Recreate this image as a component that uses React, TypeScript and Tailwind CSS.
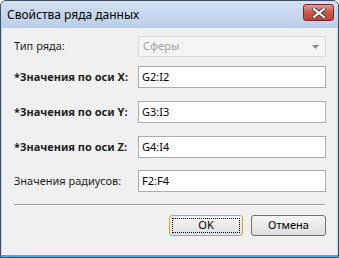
import * as React from "react"

const font = { fontFamily: '"Noto Sans", "DejaVu Sans", sans-serif' }

function Field({ value }: { value: string }) {
  return (
    <div className="flex h-[22px] w-[188px] items-center border border-[#abadb3] bg-white pl-[3px] text-[11px] text-black">
      {value}
    </div>
  )
}

function Row({
  label,
  bold,
  children,
  className,
}: {
  label: string
  bold?: boolean
  children: React.ReactNode
  className?: string
}) {
  return (
    <div className={"flex items-center " + (className ?? "")}>
      <span
        className={
          "w-[124px] text-[11px] text-[#1e1e1e] " + (bold ? "font-bold" : "")
        }
      >
        {label}
      </span>
      {children}
    </div>
  )
}

export default function App() {
  return (
    <div
      className="flex h-[258px] w-[339px] flex-col overflow-hidden rounded-t-[6px] border border-[#3a4f66] bg-[#c4d6ec]"
      style={font}
    >
      <div className="flex h-[27px] shrink-0 items-center justify-between bg-gradient-to-b from-[#d2e0f1] to-[#bccfe8] pl-[6px] pr-[4px]">
        <span className="text-[12px] text-black">Свойства ряда данных</span>
        <div className="mt-[-4px] flex h-[17px] w-[31px] items-center justify-center rounded-[3px] border border-[#6e2b26] bg-gradient-to-b from-[#e29a8e] via-[#c9574a] to-[#b5463a]">
          <svg width="14" height="10" viewBox="0 0 14 10">
            <path
              d="M2 1 L12 9 M12 1 L2 9"
              stroke="#3a3a3a"
              strokeWidth="4"
              strokeLinecap="square"
            />
            <path
              d="M2 1 L12 9 M12 1 L2 9"
              stroke="#ffffff"
              strokeWidth="2.2"
              strokeLinecap="square"
            />
          </svg>
        </div>
      </div>
      <div className="mx-px flex flex-1 flex-col bg-[#f0f0f0] pl-[12px] pr-[10px] pt-[8px]">
        <Row label="Тип ряда:">
          <div className="flex h-[21px] w-[188px] items-center justify-between border border-[#d9d9d9] bg-[#f4f4f4] pl-[4px] pr-[6px] text-[11px] text-[#a0a0a0]">
            <span>Сферы</span>
            <svg width="7" height="4" viewBox="0 0 7 4">
              <path d="M0 0 H7 L3.5 4 Z" fill="#8a8a8a" />
            </svg>
          </div>
        </Row>
        <Row label="*Значения по оси X:" bold className="mt-[9px]">
          <Field value="G2:I2" />
        </Row>
        <Row label="*Значения по оси Y:" bold className="mt-[13px]">
          <Field value="G3:I3" />
        </Row>
        <Row label="*Значения по оси Z:" bold className="mt-[13px]">
          <Field value="G4:I4" />
        </Row>
        <Row label="Значения радиусов:" className="mt-[12px]">
          <Field value="F2:F4" />
        </Row>
        <div className="mt-[12px] mr-[2px] h-[2px] border-t border-[#a0a0a0] border-b-white border-b" />
        <div className="mt-[9px] flex justify-end gap-[8px] pr-[1px]">
          <div className="flex h-[21px] w-[74px] items-center justify-center rounded-[3px] border border-[#e0a030] bg-gradient-to-b from-[#f6f6f6] to-[#dedede] p-[2px]">
            <div className="flex h-full w-full items-center justify-center border border-dotted border-black text-[11px] text-black">
              OK
            </div>
          </div>
          <div className="flex h-[21px] w-[75px] items-center justify-center rounded-[3px] border border-[#707070] bg-gradient-to-b from-[#f6f6f6] to-[#dedede] text-[11px] text-black">
            Отмена
          </div>
        </div>
      </div>
      <div className="h-[2px] shrink-0 bg-[#2fb6e0]" />
    </div>
  )
}
